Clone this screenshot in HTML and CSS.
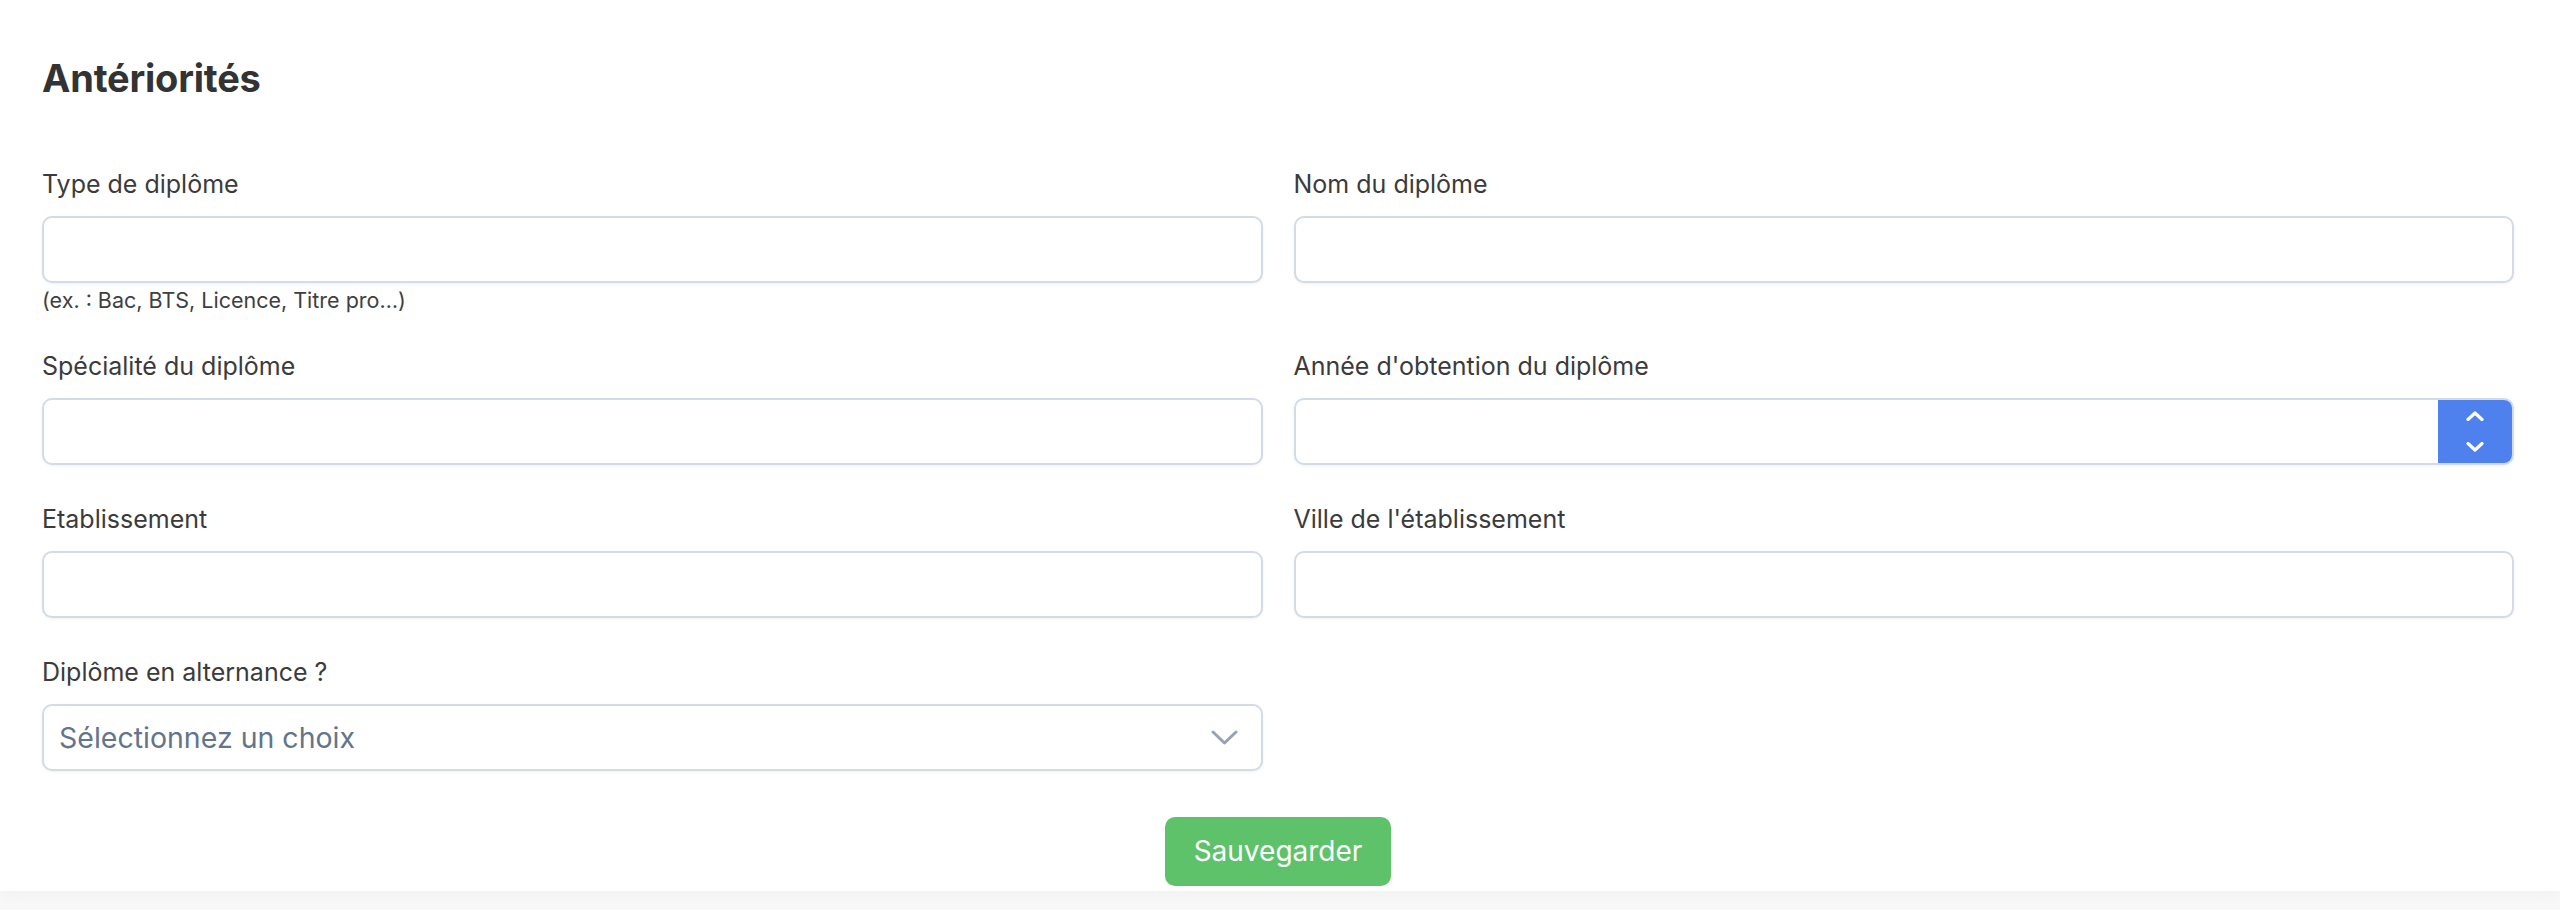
FILE: index.html
```html
<!DOCTYPE html>
<html lang="fr">

<head>
    <meta charset="UTF-8" />
    <meta name="viewport" content="width=device-width, initial-scale=1.0" />
    <title>Antériorités</title>
    <link rel="stylesheet" href="styles.css">
</head>

<body>
    <div class="card">
        <h2 class="title">Antériorités</h2>

        <form class="form-grid">
            <div class="field">
                <label class="label" for="type">Type de diplôme</label>
                <input class="input" id="type" type="text">
                <p class="hint">(ex. : Bac, BTS, Licence, Titre pro…)</p>
            </div>

            <div class="field">
                <label class="label" for="nom">Nom du diplôme</label>
                <input class="input" id="nom" type="text">
            </div>

            <div class="field">
                <label class="label" for="specialite">Spécialité du diplôme</label>
                <input class="input" id="specialite" type="text">
            </div>

            <div class="field">
                <label class="label" for="annee">Année d'obtention du diplôme</label>
                <div class="number-box">
                    <input class="number-input" id="annee" type="text">
                    <span class="spinner">
                        <svg width="18" height="10" viewBox="0 0 18 10">
                            <polyline points="2,8.5 9,2 16,8.5" fill="none" stroke="#fff" stroke-width="3.2" stroke-linecap="round" stroke-linejoin="round" />
                        </svg>
                        <svg width="18" height="10" viewBox="0 0 18 10">
                            <polyline points="2,1.5 9,8 16,1.5" fill="none" stroke="#fff" stroke-width="3.2" stroke-linecap="round" stroke-linejoin="round" />
                        </svg>
                    </span>
                </div>
            </div>

            <div class="field">
                <label class="label" for="etablissement">Etablissement</label>
                <input class="input" id="etablissement" type="text">
            </div>

            <div class="field">
                <label class="label" for="ville">Ville de l'établissement</label>
                <input class="input" id="ville" type="text">
            </div>

            <div class="field">
                <label class="label" for="alternance">Diplôme en alternance ?</label>
                <div class="select-box">
                    <select class="select" id="alternance">
                        <option>Sélectionnez un choix</option>
                        <option>Oui</option>
                        <option>Non</option>
                    </select>
                    <svg class="select-arrow" width="27" height="15" viewBox="0 0 27 15">
                        <polyline points="2,2 13.5,13 25,2" fill="none" stroke="#98a2b5" stroke-width="3" stroke-linecap="round" stroke-linejoin="round" />
                    </svg>
                </div>
            </div>
        </form>

        <div class="actions">
            <button class="btn-save" type="button">Sauvegarder</button>
        </div>
    </div>
</body>

</html>
```

FILE: styles.css
```css
html,
body {
    margin: 0;
    padding: 0;
}

body {
    font-family: Inter, "Liberation Sans", Arial, sans-serif;
    background: #f8f8f8;
    color: #374151;
    height: 910px;
    overflow: hidden;
}

.card {
    background: #fff;
    padding: 52px 46px 5px 42px;
    box-shadow: 0 4px 16px rgba(0, 0, 0, 0.035);
}

.title {
    margin: 0 0 61px;
    font-size: 38px;
    line-height: 52px;
    font-weight: 700;
    color: #333;
    letter-spacing: -0.2px;
}

.form-grid {
    display: grid;
    grid-template-columns: 1fr 1fr;
    column-gap: 31px;
    row-gap: 35px;
    align-items: start;
}

.field {
    display: flex;
    flex-direction: column;
}

.label {
    display: block;
    margin-bottom: 12px;
    font-size: 25px;
    line-height: 39px;
    color: #3b3b3b;
}

.input,
.select,
.number-box {
    box-sizing: border-box;
    width: 100%;
    height: 67px;
    border: 2px solid #d3dbe6;
    border-radius: 10px;
    background: #fff;
    box-shadow: 0 1px 3px rgba(15, 23, 42, 0.06);
    font-family: inherit;
}

.input {
    padding: 0 18px;
    font-size: 26px;
    outline: none;
}

.hint {
    margin: 5px 0 0;
    font-size: 21.5px;
    line-height: 24px;
    color: #3f3f3f;
}

.number-box {
    display: flex;
    overflow: hidden;
}

.number-input {
    flex: 1;
    min-width: 0;
    border: none;
    outline: none;
    padding: 0 18px;
    font-size: 26px;
    font-family: inherit;
    background: transparent;
}

.spinner {
    width: 74px;
    background: #4f81ee;
    display: flex;
    flex-direction: column;
    align-items: center;
    justify-content: center;
    gap: 21px;
}

.spinner svg {
    display: block;
}

.select-box {
    position: relative;
}

.select {
    appearance: none;
    -webkit-appearance: none;
    padding: 0 60px 0 15px;
    font-size: 28.5px;
    color: #64748b;
    outline: none;
}

.select-arrow {
    position: absolute;
    right: 25px;
    top: 26px;
    pointer-events: none;
}

.actions {
    display: flex;
    justify-content: center;
    margin-top: 46px;
}

.btn-save {
    background: #5ec26a;
    color: #fff;
    border: none;
    border-radius: 10px;
    padding: 12px 29px;
    font-family: inherit;
    font-size: 28px;
    line-height: 45px;
    cursor: pointer;
}
```
